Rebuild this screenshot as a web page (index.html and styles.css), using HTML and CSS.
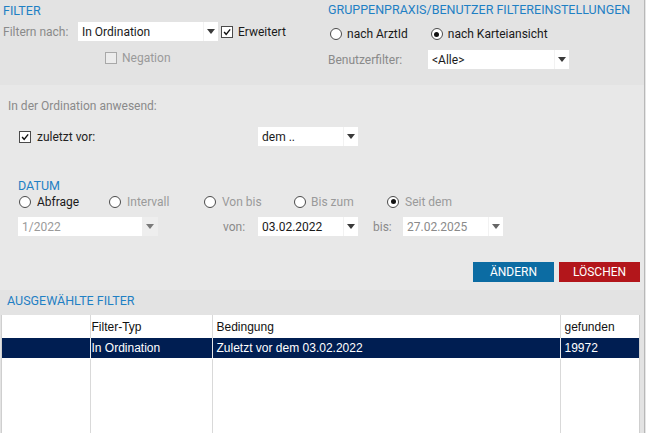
FILE: index.html
```html
<!DOCTYPE html>
<html lang="de">
<head>
<meta charset="utf-8">
<title>Filter</title>
<link rel="stylesheet" href="styles.css">
</head>
<body>
<div class="page">
  <section class="top">
    <div class="top-left">
      <div class="title">FILTER</div>
      <div class="row r1">
        <span class="lbl w75">Filtern nach:</span>
        <div class="select w140"><span class="val">In Ordination</span><span class="arrow"><i></i></span></div>
        <span class="cb checked ml3"><svg viewBox="0 0 12 12"><polyline points="2.5,6 5,8.8 9.8,2.8"/></svg></span>
        <span class="cbtext">Erweitert</span>
      </div>
      <div class="row r2">
        <span class="cb disabled"></span>
        <span class="cbtext muted">Negation</span>
      </div>
    </div>
    <div class="top-right">
      <div class="title">GRUPPENPRAXIS/BENUTZER FILTEREINSTELLUNGEN</div>
      <div class="row r3">
        <span class="radio"></span><span class="rtext">nach ArztId</span>
        <span class="radio checked ml23"></span><span class="rtext">nach Karteiansicht</span>
      </div>
      <div class="row r4">
        <span class="lbl w100">Benutzerfilter:</span>
        <div class="select w141"><span class="val">&lt;Alle&gt;</span><span class="arrow"><i></i></span></div>
      </div>
    </div>
  </section>

  <section class="mid">
    <div class="lbl anw">In der Ordination anwesend:</div>
    <div class="row r5">
      <span class="cb checked"><svg viewBox="0 0 12 12"><polyline points="2.5,6 5,8.8 9.8,2.8"/></svg></span>
      <span class="cbtext zv">zuletzt vor:</span>
      <div class="select w100"><span class="val">dem ..</span><span class="arrow"><i></i></span></div>
    </div>
    <div class="title datum">DATUM</div>
    <div class="row r6">
      <span class="radio"></span><span class="rtext dark wa">Abfrage</span>
      <span class="radio"></span><span class="rtext muted wb">Intervall</span>
      <span class="radio"></span><span class="rtext muted wc">Von bis</span>
      <span class="radio"></span><span class="rtext muted wd">Bis zum</span>
      <span class="radio checked"></span><span class="rtext muted">Seit dem</span>
    </div>
    <div class="row r7">
      <div class="select w140 dis"><span class="val">1/2022</span><span class="arrow"><i></i></span></div>
      <span class="lbl von">von:</span>
      <div class="select w100"><span class="val">03.02.2022</span><span class="arrow"><i></i></span></div>
      <span class="lbl bis">bis:</span>
      <div class="select w100 grey"><span class="val">27.02.2025</span><span class="arrow"><i></i></span></div>
    </div>
    <div class="row r8">
      <button class="btn blue">ÄNDERN</button>
      <button class="btn red">LÖSCHEN</button>
    </div>
  </section>

  <section class="sel">
    <div class="title selt">AUSGEWÄHLTE FILTER</div>
    <div class="tablewrap">
      <table class="grid">
        <colgroup>
          <col class="c1"><col class="c2"><col class="c3"><col class="c4">
        </colgroup>
        <thead>
          <tr><th></th><th class="p1">Filter-Typ</th><th>Bedingung</th><th>gefunden</th></tr>
        </thead>
        <tbody>
          <tr class="active"><td></td><td class="p1">In Ordination</td><td>Zuletzt vor dem 03.02.2022</td><td>19972</td></tr>
          <tr class="filler"><td></td><td></td><td></td><td></td></tr>
        </tbody>
      </table>
    </div>
  </section>
</div>
</body>
</html>
```

FILE: styles.css
```css
* { box-sizing: border-box; }
html, body { margin: 0; padding: 0; }
body {
  width: 646px;
  height: 433px;
  overflow: hidden;
  background: #e6e6e6;
  font-family: Roboto, "Liberation Sans", sans-serif;
  font-size: 12px;
  color: #1a1a1a;
}
.page {
  width: 645px;
  height: 433px;
  border-right: 1px solid #b8b8b8;
  display: flex;
  flex-direction: column;
}
.title {
  color: #1f80c4;
  font-size: 12.5px;
  line-height: 14px;
  text-transform: uppercase;
}
.row { display: flex; align-items: center; }
.lbl { color: #8a8a8a; white-space: nowrap; }
.muted { color: #9a9a9a; }
.dark { color: #1a1a1a; }

/* top */
.top {
  display: flex;
  height: 85px;
  background: #e3e3e3;
  flex: none;
}
.top-left { width: 328px; padding: 4px 0 0 3px; }
.top-right { flex: 1; padding: 3px 0 0 0; }
.r1 { margin-top: 4px; height: 19px; }
.w75 { width: 75px; }
.w100 { width: 100px; }
.r2 { margin-top: 10px; height: 14px; padding-left: 102px; }
.r3 { margin-top: 10px; height: 14px; padding-left: 2px; }
.r4 { margin-top: 9px; height: 19px; }
.ml3 { margin-left: 3px; }
.ml23 { margin-left: 23px; }

/* select */
.select {
  display: flex;
  height: 19px;
  background: #fff;
  align-items: center;
  flex: none;
}
.select .val { flex: 1; padding-left: 4px; white-space: nowrap; overflow: hidden; }
.select .arrow {
  width: 15px;
  height: 19px;
  display: flex;
  align-items: center;
  justify-content: center;
  border-left: 1px solid #f2f2f2;
}
.select .arrow i {
  display: block;
  width: 0; height: 0;
  border-left: 4.5px solid transparent;
  border-right: 4.5px solid transparent;
  border-top: 5px solid #3a3a3a;
}
.select.w140 { width: 140px; }
.select.w141 { width: 141px; }
.select.w100 { width: 100px; }
.select.dis .val { color: #9a9a9a; }
.select.dis .arrow { background: #eeeeee; border-left: none; width: 16px; }
.select.dis .arrow i { border-top-color: #7a7a7a; }
.select.grey .val { color: #8a8a8a; }
.select.grey .arrow i { border-top-color: #666; }

/* checkbox */
.cb {
  width: 12px; height: 12px;
  border: 1px solid #4a4a4a;
  background: #fff;
  flex: none;
  display: flex;
}
.cb svg { width: 10px; height: 10px; }
.cb svg polyline { fill: none; stroke: #111; stroke-width: 1.7; }
.cb.disabled { border-color: #a8a8a8; background: #ececec; }
.cbtext { margin-left: 5px; white-space: nowrap; }

/* radio */
.radio {
  width: 12px; height: 12px;
  border: 1px solid #4a4a4a;
  border-radius: 50%;
  background: #fff;
  flex: none;
  display: flex;
  align-items: center;
  justify-content: center;
}
.radio.checked::after {
  content: "";
  width: 5px; height: 5px;
  border-radius: 50%;
  background: #111;
}
.rtext { margin-left: 5px; white-space: nowrap; }

/* mid */
.mid {
  height: 205px;
  background: #e8e8e8;
  padding: 14px 0 0 0;
  flex: none;
}
.anw { padding-left: 8px; line-height: 14px; }
.r5 { margin-top: 14px; height: 19px; padding-left: 19px; }
.zv { width: 221px; margin-left: 6px; color: #222; }
.datum { margin-top: 33px; padding-left: 18px; }
.r6 { margin-top: 1px; height: 15px; padding-left: 19px; }
.wa { width: 72px; margin-left: 6px; }
.wb { width: 77px; margin-left: 6px; }
.wc { width: 72px; margin-left: 6px; }
.wd { width: 76px; margin-left: 5px; }
.r6 .rtext:last-child { margin-left: 6px; }
.r7 { margin-top: 8px; height: 19px; padding-left: 18px; }
.von { width: 100px; padding-left: 65px; }
.bis { width: 45px; padding-left: 15px; }
.r8 { margin-top: 26px; justify-content: flex-end; gap: 5px; padding-right: 4px; }
.btn {
  width: 81px;
  height: 20px;
  border: none;
  color: #fff;
  font-family: Roboto, "Liberation Sans", sans-serif;
  font-size: 12px;
  padding: 0;
  line-height: 20px;
}
.btn.blue { background: #0c6ca3; }
.btn.red { background: #b3161b; }

/* selected filters */
.sel {
  flex: 1;
  background: #e3e3e3;
  display: flex;
  flex-direction: column;
}
.selt { padding: 4px 0 0 7px; height: 25px; }
.tablewrap {
  flex: 1;
  margin-left: 1px;
  width: 639px;
  background: #fff;
  border-left: 1px solid #cfcfcf;
  border-right: 1px solid #cfcfcf;
}
.grid {
  width: 637px;
  height: 100%;
  border-collapse: collapse;
  table-layout: fixed;
  font-family: "Liberation Sans", Arial, sans-serif;
  font-size: 12px;
}
.c1 { width: 88px; }
.c2 { width: 122px; }
.c3 { width: 348px; }
.c4 { width: 79px; }
.grid th, .grid td {
  padding: 0 0 0 4px;
  text-align: left;
  font-weight: normal;
  border-left: 1px solid #d9d9d9;
  white-space: nowrap;
  overflow: hidden;
  color: #111;
}
.grid th:first-child, .grid td:first-child { border-left: none; }
.grid .p1 { padding-left: 1px; }
.grid thead tr { height: 23px; }
.grid tr.active { height: 20px; background: #001e52; }
.grid tr.active td { color: #fff; border-left-color: #e8e8e8; border-bottom: 1px solid #fff; }
.grid tr.filler td { height: auto; }
```
